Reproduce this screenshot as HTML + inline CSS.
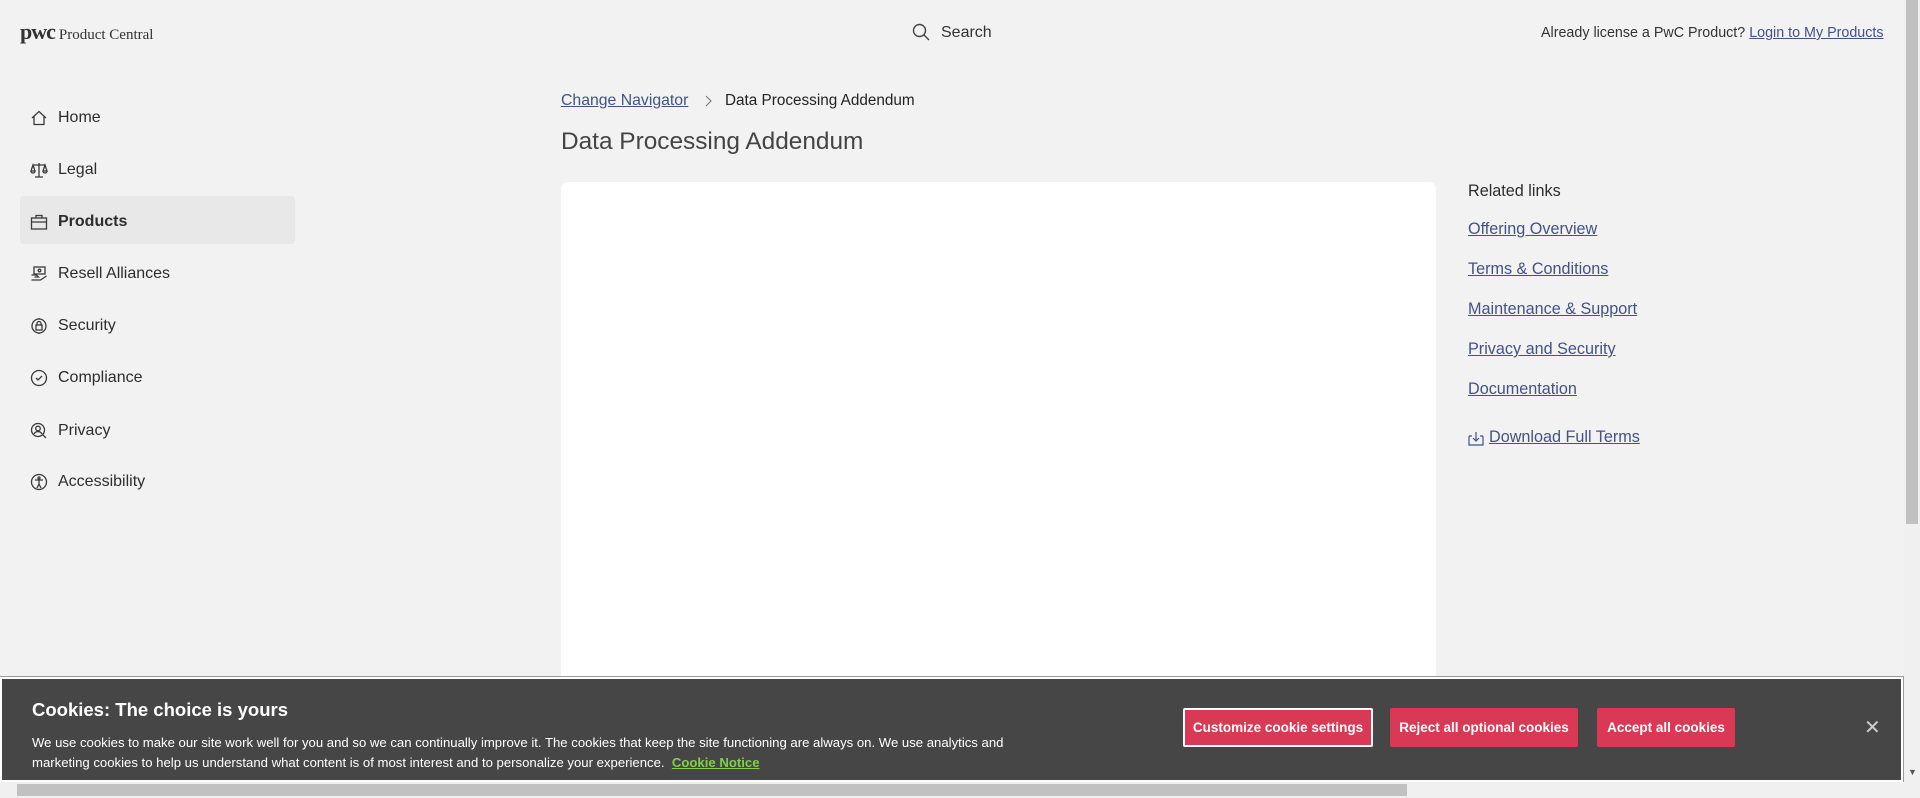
<!DOCTYPE html>
<html><head><meta charset="utf-8"><style>
*{margin:0;padding:0;box-sizing:border-box}
html,body{width:1920px;height:798px;overflow:hidden;background:#f2f2f2;font-family:"Liberation Sans",Arial,sans-serif;color:#2d2d2d}
.a{position:absolute;white-space:nowrap}
a{color:#415385;text-decoration:underline}
.nav{position:absolute;left:20px;width:275px;height:48px;display:flex;align-items:center;font-size:16px;color:#2d2d2d;padding-top:3px}
.nav svg{margin-left:10px;margin-right:10px;width:18px;height:18px;fill:none;stroke:#3a3a3a;stroke-width:1.3}
.rl{position:absolute;left:1468px;font-size:16.2px}
.btn{position:absolute;top:708px;height:39px;background:#d93954;color:#fff;font-weight:bold;font-size:13.5px;display:flex;align-items:center;justify-content:center;border-radius:2px}
</style></head><body>
<div class="a" style="left:20px;top:19px;font-family:'Liberation Serif',serif;"><span style="font-size:22px;font-weight:bold;letter-spacing:-1px;color:#333">pwc</span> <span style="font-size:15px;color:#333">Product Central</span></div>
<svg class="a" style="left:912px;top:23px" width="18" height="18" viewBox="0 0 18 18" fill="none" stroke="#444" stroke-width="1.4"><circle cx="7.5" cy="7.5" r="6"/><path d="M12 12l5 5"/></svg>
<div class="a" style="left:941px;top:24px;font-size:16px;color:#333">Search</div>
<div class="a" style="left:1541px;top:25px;font-size:14.3px;color:#333">Already license a PwC Product? <a href="#">Login to My Products</a></div>

<div class="nav" style="top:92px"><svg viewBox="0 0 18 18"><path d="M2 9L9 2.5 16 9M4 7.5V15.5H14V7.5"/></svg>Home</div>
<div class="nav" style="top:144px"><svg viewBox="0 0 18 18"><path d="M9 2v14M5 16h8M3 4h12M3 4l-2 6h4zM15 4l-2 6h4zM1 10a2 2 0 004 0M13 10a2 2 0 004 0"/></svg>Legal</div>
<div class="nav" style="top:196px;background:#e8e8e8;border-radius:4px"><svg viewBox="0 0 18 18"><rect x="1.5" y="5" width="15" height="11"/><path d="M6 5V2.5h6V5M1.5 9h15"/></svg><span style="font-weight:bold;color:#2d2d2d">Products</span></div>
<div class="nav" style="top:248px"><svg viewBox="0 0 18 18"><rect x="4" y="2" width="11" height="7"/><circle cx="9.5" cy="5.5" r="1.3"/><path d="M1.5 10h5l2 2h-4M1.5 15h9l6-4"/></svg>Resell Alliances</div>
<div class="nav" style="top:300px"><svg viewBox="0 0 18 18"><circle cx="9" cy="9" r="7"/><rect x="6" y="8" width="6" height="5"/><path d="M7 8V6.5a2 2 0 014 0V8M9 1v1.5M9 15.5V17"/></svg>Security</div>
<div class="nav" style="top:352px"><svg viewBox="0 0 18 18"><circle cx="9" cy="9" r="7.5"/><path d="M6 9l2 2 4-4"/></svg>Compliance</div>
<div class="nav" style="top:405px"><svg viewBox="0 0 18 18"><circle cx="8" cy="8" r="6.5"/><circle cx="8" cy="6.5" r="2.3"/><path d="M4 12a4.5 4.5 0 018 0M12.5 12.5L16 16"/></svg>Privacy</div>
<div class="nav" style="top:456px"><svg viewBox="0 0 18 18"><circle cx="9" cy="9" r="7.5"/><circle cx="9" cy="5" r="1"/><path d="M5 7h8M9 7v4M9 11l-2 4M9 11l2 4"/></svg>Accessibility</div>

<div class="a" style="left:561px;top:92px;font-size:15.8px"><a href="#">Change Navigator</a></div>
<svg class="a" style="left:703px;top:95px" width="10" height="12" viewBox="0 0 10 12" fill="none" stroke="#777" stroke-width="1.1"><path d="M3 1l5 5-5 5"/></svg>
<div class="a" style="left:725px;top:92px;font-size:15.3px;color:#222">Data Processing Addendum</div>
<div class="a" style="left:561px;top:128px;font-size:24.4px;color:#444">Data Processing Addendum</div>
<div class="a" style="left:561px;top:182px;width:875px;height:600px;background:#fff;border-radius:7px"></div>

<div class="rl" style="top:182px;color:#2d2d2d">Related links</div>
<div class="rl" style="top:220px"><a href="#">Offering Overview</a></div>
<div class="rl" style="top:260px"><a href="#">Terms &amp; Conditions</a></div>
<div class="rl" style="top:300px"><a href="#">Maintenance &amp; Support</a></div>
<div class="rl" style="top:340px"><a href="#">Privacy and Security</a></div>
<div class="rl" style="top:380px"><a href="#">Documentation</a></div>
<svg class="a" style="left:1468px;top:430px" width="16" height="16" viewBox="0 0 16 16" fill="none" stroke="#415385" stroke-width="1.2"><path d="M1 6v9h14V6M8 2v9M5 8l3 3 3-3M1 6h3M12 6h3"/></svg>
<div class="rl" style="left:1489px;top:428px"><a href="#">Download Full Terms</a></div>

<div class="a" style="left:0;top:677px;width:1903px;height:105px;background:#464646;border:2px solid #fff;outline:1px solid #999"></div>
<div class="a" style="left:32px;top:699px;font-size:18.5px;font-weight:bold;color:#fff">Cookies: The choice is yours</div>
<div class="a" style="left:32px;top:733px;font-size:13.15px;line-height:20px;color:#fff">We use cookies to make our site work well for you and so we can continually improve it. The cookies that keep the site functioning are always on. We use analytics and<br>marketing cookies to help us understand what content is of most interest and to personalize your experience. &nbsp;<a href="#" style="color:#7fd14a;font-weight:bold">Cookie Notice</a></div>
<div class="btn" style="left:1183px;width:190px;border:2px solid #fff">Customize cookie settings</div>
<div class="btn" style="left:1390px;width:188px">Reject all optional cookies</div>
<div class="btn" style="left:1597px;width:138px">Accept all cookies</div>
<div class="a" style="left:1864px;top:715px;font-size:20px;color:#ccc">✕</div>

<div class="a" style="left:1904px;top:0;width:16px;height:782px;background:#f0f0f0"></div>
<div class="a" style="left:1906px;top:0;width:12px;height:524px;background:#c1c1c1"></div>
<div class="a" style="left:1908px;top:767px;font-size:9px;color:#555">▼</div>
<div class="a" style="left:0;top:782px;width:1920px;height:16px;background:#f0f0f0"></div>
<div class="a" style="left:17px;top:784px;width:1390px;height:12px;background:#c1c1c1"></div>
</body></html>
